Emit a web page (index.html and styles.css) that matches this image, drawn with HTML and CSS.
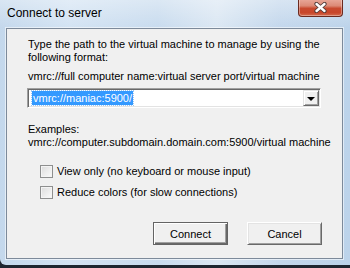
FILE: index.html
```html
<!DOCTYPE html>
<html lang="en">
  <head>
    <meta charset="UTF-8" />
    <title>Connect to server</title>
    <link rel="stylesheet" href="styles.css">
  </head>
  <body>
    <div class="window">
      <!-- Barra del titolo -->
      <div class="titlebar">
        <span class="title">Connect to server</span>
        <div class="close">
          <svg width="15" height="11" viewBox="0 0 15 11">
            <path d="M3.5 2 L11.5 9 M11.5 2 L3.5 9" stroke="#4e3a38" stroke-width="4.2" stroke-linecap="round" />
            <path d="M3.5 2 L11.5 9 M11.5 2 L3.5 9" stroke="#ffffff" stroke-width="2.4" stroke-linecap="round" />
          </svg>
        </div>
      </div>

      <!-- Area client -->
      <div class="client">
        <p class="text">Type the path to the virtual machine to manage by using the following format:</p>
        <p class="text format">vmrc://full computer name:virtual server port/virtual machine</p>

        <div class="combo">
          <span class="combo-value"><span class="selected">vmrc://maniac:5900/</span></span>
          <span class="combo-button"><span class="arrow"></span></span>
        </div>

        <p class="text examples">Examples:</p>
        <p class="text nowrap">vmrc://computer.subdomain.domain.com:5900/virtual machine</p>

        <div class="options">
          <label class="check"><span class="box"></span>View only (no keyboard or mouse input)</label>
          <label class="check"><span class="box"></span>Reduce colors (for slow connections)</label>
        </div>

        <div class="buttons">
          <button class="btn default">Connect</button>
          <button class="btn">Cancel</button>
        </div>
      </div>
    </div>
  </body>
</html>
```

FILE: styles.css
```css
body,
html {
  margin: 0;
  padding: 0;
  width: 100%;
  height: 100%;
  overflow: hidden;
  background: #1e2630;
}

/* Finestra con cornice Aero */
.window {
  width: 350px;
  height: 265px;
  box-sizing: border-box;
  background: linear-gradient(90deg, #c4d8ec 0%, #d3e3f3 20%, #c8dbee 45%, #dbe7f3 62%, #c3d7ec 80%, #bcd3ea 100%);
  border-bottom-left-radius: 6px;
  display: flex;
  flex-direction: column;
}

.titlebar {
  height: 28px;
  display: flex;
  align-items: flex-start;
  justify-content: space-between;
  padding-left: 7px;
  padding-right: 7px;
  background: linear-gradient(180deg, rgba(255, 255, 255, 0.35), rgba(255, 255, 255, 0));
}

.title {
  margin-top: 6px;
  font-family: "Liberation Sans", Arial, sans-serif;
  font-size: 12px;
  color: #000;
}

.close {
  width: 45px;
  height: 18px;
  box-sizing: border-box;
  margin-top: -1px;
  border: 1px solid #6b2a1f;
  border-top: none;
  border-radius: 0 0 4px 4px;
  background: linear-gradient(180deg, #e9a99b 0%, #dc8a76 40%, #c84a2f 55%, #c8462a 80%, #d46d4f 100%);
  box-shadow: inset 0 0 0 1px rgba(255, 255, 255, 0.35);
  display: flex;
  align-items: center;
  justify-content: center;
}

/* Contenuto della finestra */
.client {
  flex: 1;
  margin: 0 7px 6px 6px;
  border: 1px solid #7d8a9a;
  box-shadow: 0 0 0 1px rgba(255, 255, 255, 0.55);
  background: #f0f0f0;
  padding: 9px 20px 0 21px;
  font-family: "Liberation Sans", Arial, sans-serif;
  font-size: 11px;
  color: #000;
}

.text {
  margin: 0;
  line-height: 13px;
}

.nowrap {
  white-space: nowrap;
}

.format {
  margin-top: 6px;
}

.examples {
  margin-top: 15px;
}

/* Casella combinata */
.combo {
  margin-top: 5px;
  margin-left: -1px;
  width: 294px;
  height: 20px;
  box-sizing: border-box;
  background: #fff;
  border-top: 1px solid #a0a0a0;
  border-left: 1px solid #a0a0a0;
  border-right: 1px solid #ffffff;
  border-bottom: 1px solid #ffffff;
  box-shadow: inset 1px 1px #696969, inset -1px -1px #e3e3e3;
  display: flex;
  align-items: center;
  padding: 1px;
}

.combo-value {
  flex: 1;
  padding-left: 3px;
  display: flex;
}

.selected {
  background: #3399ff;
  color: #fff;
  line-height: 14px;
  padding: 0 1px;
  outline: 1px dotted #9cc8f5;
}

.combo-button {
  width: 16px;
  height: 16px;
  box-sizing: border-box;
  background: #f0f0f0;
  border-top: 1px solid #e3e3e3;
  border-left: 1px solid #e3e3e3;
  border-right: 1px solid #696969;
  border-bottom: 1px solid #696969;
  box-shadow: inset 1px 1px #ffffff, inset -1px -1px #a0a0a0;
  display: flex;
  align-items: center;
  justify-content: center;
}

.arrow {
  width: 0;
  height: 0;
  border-left: 4px solid transparent;
  border-right: 4px solid transparent;
  border-top: 4px solid #000;
  margin-top: 1px;
}

/* Caselle di controllo */
.options {
  margin-top: 16px;
  padding-left: 12px;
  display: flex;
  flex-direction: column;
  gap: 8px;
}

.check {
  display: flex;
  align-items: center;
  height: 13px;
  line-height: 13px;
}

.box {
  width: 13px;
  height: 13px;
  box-sizing: border-box;
  border: 1px solid #8e8f8f;
  background: linear-gradient(135deg, #dcdcdc, #fbfbfb);
  box-shadow: inset 0 0 0 1px #f4f4f4;
  margin-right: 4px;
}

/* Pulsanti */
.buttons {
  margin-top: 23px;
  display: flex;
  justify-content: flex-end;
  gap: 19px;
}

.btn {
  width: 75px;
  height: 23px;
  box-sizing: border-box;
  padding: 0;
  font-family: "Liberation Sans", Arial, sans-serif;
  font-size: 11px;
  color: #000;
  background: #f0f0f0;
  border-top: 1px solid #ffffff;
  border-left: 1px solid #ffffff;
  border-right: 1px solid #696969;
  border-bottom: 1px solid #696969;
  box-shadow: inset 1px 1px #e3e3e3, inset -1px -1px #a0a0a0;
}

.btn.default {
  border: 1px solid #646464;
  box-shadow: inset 1px 1px #ffffff, inset -1px -1px #696969, inset -2px -2px #a0a0a0;
}
```
